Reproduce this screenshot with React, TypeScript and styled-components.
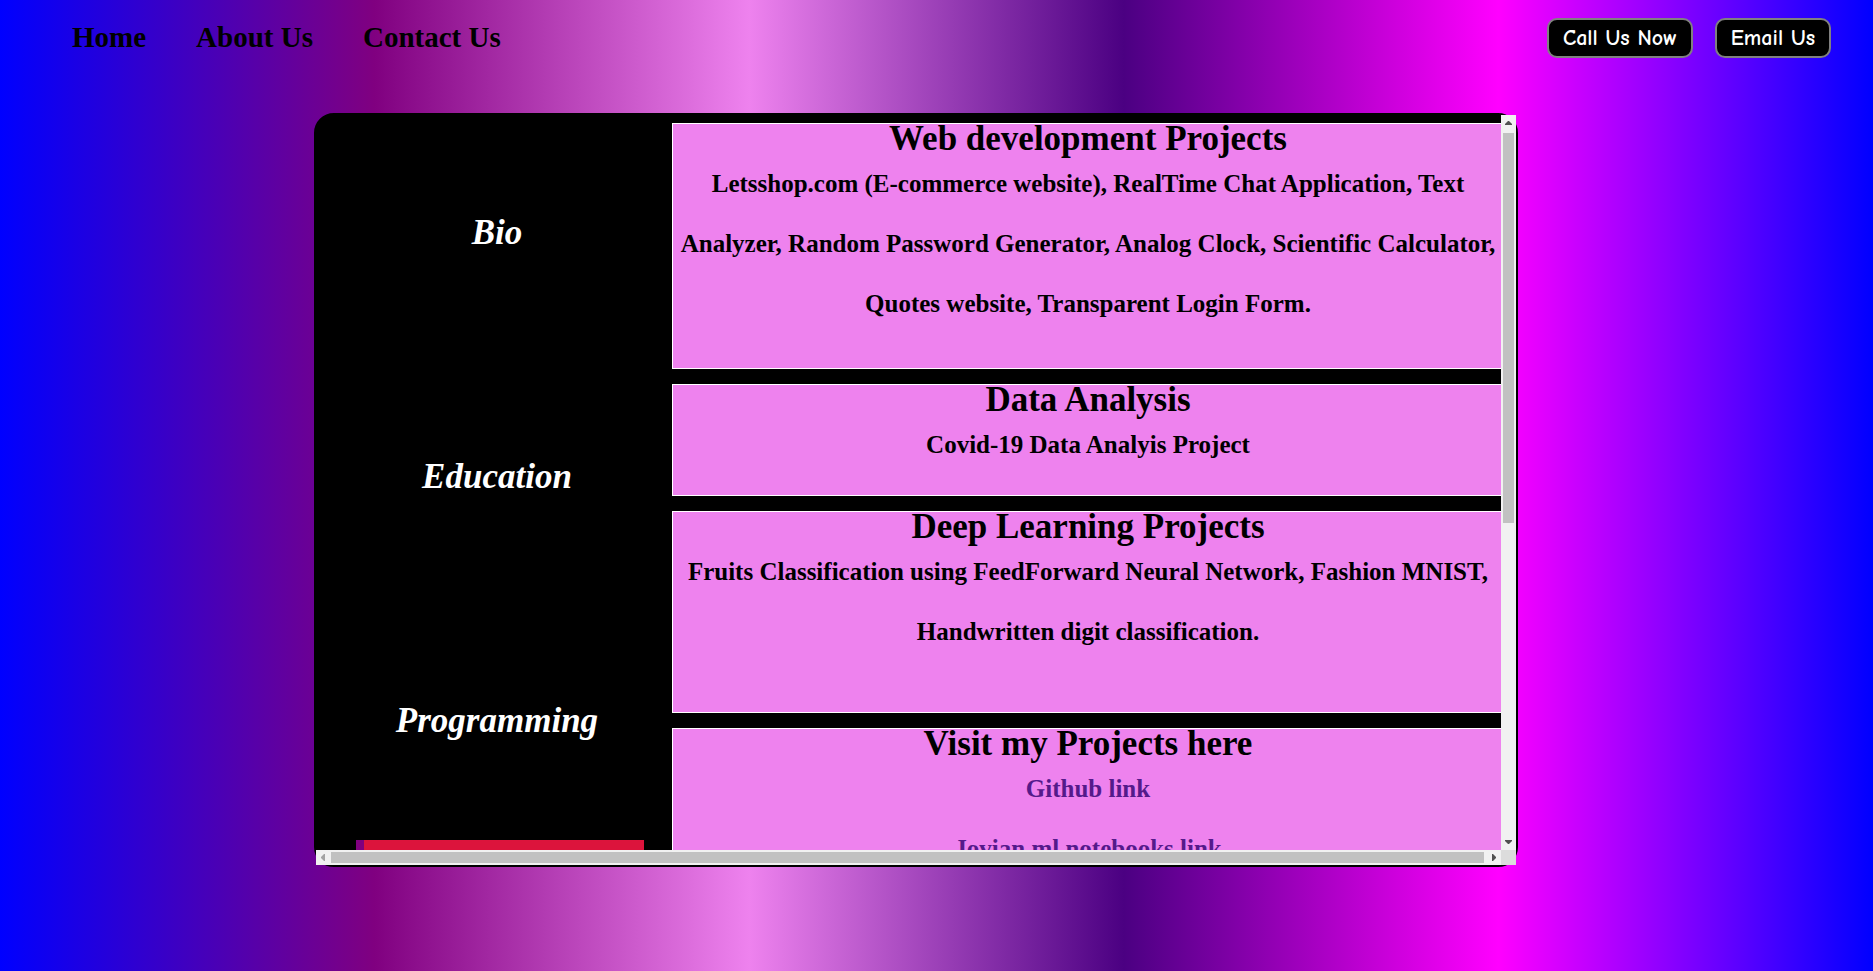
import React from 'react';
import styled, { createGlobalStyle } from 'styled-components';

const GlobalStyle = createGlobalStyle`
  * { box-sizing: border-box; margin: 0; padding: 0; }
  body {
    min-height: 100vh;
    background: linear-gradient(to right, blue, purple, violet, indigo, magenta, blue);
    font-family: "Liberation Serif", "Times New Roman", serif;
    font-weight: bold;
  }
`;

const Header = styled.header`
  display: flex;
  justify-content: space-between;
  align-items: center;
  height: 75px;
  padding: 0 42px 0 72px;
`;

const Nav = styled.nav`
  display: flex;
  gap: 50px;
  padding-bottom: 2px;
`;

const NavLink = styled.a`
  color: black;
  font-size: 29px;
  line-height: 36px;
  text-decoration: none;
`;

const Actions = styled.div`
  display: flex;
  gap: 22px;
`;

const ActionButton = styled.button`
  height: 40px;
  padding: 0 14px;
  border: 2px solid gray;
  border-radius: 10px;
  background: black;
  color: white;
  font: bold 22px "Comic Sans MS", "Comic Neue", "Open Sans", sans-serif;
`;

const Main = styled.main`
  display: grid;
  grid-template-columns: 314fr 1204fr 355fr;
  padding: 38px 0 104px;
`;

const Panel = styled.section`
  grid-column: 2;
  display: grid;
  grid-template: 735px 15px / minmax(0, 1fr) 15px;
  border: 2px solid black;
  border-radius: 20px;
  background: black;
`;

const Viewport = styled.div`
  display: grid;
  grid-template-columns: 356px minmax(832px, 1fr);
  overflow: hidden;
`;

const Menu = styled.ul`
  display: grid;
  grid-template-rows: 237px;
  grid-auto-rows: 244px;
  padding: 0 28px 0 40px;
  list-style: none;
`;

const MenuItem = styled.li<{ $active?: boolean }>`
  display: flex;
  justify-content: center;
  align-items: flex-end;
  padding: 0 14px 99px 0;
  border-left: 8px solid ${(p) => (p.$active ? 'purple' : 'black')};
  background: ${(p) => (p.$active ? 'crimson' : 'black')};
`;

const MenuLink = styled.a`
  color: white;
  font-size: 35px;
  line-height: 40px;
  font-style: italic;
  text-decoration: none;
`;

const Cards = styled.div`
  display: flex;
  flex-direction: column;
  gap: 15px;
  padding-top: 8px;
`;

const Card = styled.article<{ $height: number }>`
  flex: none;
  height: ${(p) => p.$height}px;
  border: 1px solid white;
  background: violet;
  text-align: center;
`;

const CardTitle = styled.h2`
  font-size: 35px;
  line-height: 30px;
`;

const CardText = styled.p`
  font-size: 25px;
  line-height: 60px;
`;

const CardLink = styled.a`
  display: block;
  color: #551a8b;
  font-size: 25px;
  line-height: 60px;
  text-decoration: none;
`;

const Bar = styled.div<{ $vertical?: boolean }>`
  display: flex;
  flex-direction: ${(p) => (p.$vertical ? 'column' : 'row')};
  background: #f1f1f1;
`;

const Arrow = styled.svg`
  flex: none;
  width: 15px;
  height: 15px;
`;

const Track = styled.div<{ $vertical?: boolean }>`
  flex: 1;
  padding: ${(p) => (p.$vertical ? '3px 2px 0' : '2px 2px 2px 0')};
`;

const Thumb = styled.div<{ $vertical?: boolean }>`
  height: ${(p) => (p.$vertical ? 'calc(100% * 5 / 9)' : '100%')};
  background: #c1c1c1;
`;

const Corner = styled.div`
  background: #dcdcdc;
`;

const menu = ['Bio', 'Education', 'Programming'];

const cards = [
  {
    title: 'Web development Projects',
    height: 246,
    text: 'Letsshop.com (E-commerce website), RealTime Chat Application, Text Analyzer, Random Password Generator, Analog Clock, Scientific Calculator, Quotes website, Transparent Login Form.',
  },
  { title: 'Data Analysis', height: 112, text: 'Covid-19 Data Analyis Project' },
  {
    title: 'Deep Learning Projects',
    height: 202,
    text: 'Fruits Classification using FeedForward Neural Network, Fashion MNIST, Handwritten digit classification.',
  },
];

export default function App() {
  return (
    <>
      <GlobalStyle />
      <Header>
        <Nav>
          <NavLink href="#home">Home</NavLink>
          <NavLink href="#about">About Us</NavLink>
          <NavLink href="#contact">Contact Us</NavLink>
        </Nav>
        <Actions>
          <ActionButton type="button">Call Us Now</ActionButton>
          <ActionButton type="button">Email Us</ActionButton>
        </Actions>
      </Header>
      <Main>
        <Panel>
          <Viewport>
            <Menu>
              {menu.map((label) => (
                <MenuItem key={label}>
                  <MenuLink href={`#${label.toLowerCase()}`}>{label}</MenuLink>
                </MenuItem>
              ))}
              <MenuItem $active />
            </Menu>
            <Cards>
              {cards.map((c) => (
                <Card key={c.title} $height={c.height}>
                  <CardTitle>{c.title}</CardTitle>
                  <CardText>{c.text}</CardText>
                </Card>
              ))}
              <Card $height={202}>
                <CardTitle>Visit my Projects here</CardTitle>
                <CardLink href="#github">Github link</CardLink>
                <CardLink href="#jovian">Jovian.ml notebooks link</CardLink>
              </Card>
            </Cards>
          </Viewport>
          <Bar $vertical>
            <Arrow viewBox="0 0 15 15"><path d="M4 10V9L7 6H8L11 9V10Z" fill="#505050" /></Arrow>
            <Track $vertical><Thumb $vertical /></Track>
            <Arrow viewBox="0 0 15 15"><path d="M4 5V6L7 9H8L11 6V5Z" fill="#505050" /></Arrow>
          </Bar>
          <Bar>
            <Arrow viewBox="0 0 15 15"><path d="M9 4H8L5 7V8L8 11H9Z" fill="#a3a3a3" /></Arrow>
            <Track><Thumb /></Track>
            <Arrow viewBox="0 0 15 15"><path d="M6 4H7L10 7V8L7 11H6Z" fill="#505050" /></Arrow>
          </Bar>
          <Corner />
        </Panel>
      </Main>
    </>
  );
}
